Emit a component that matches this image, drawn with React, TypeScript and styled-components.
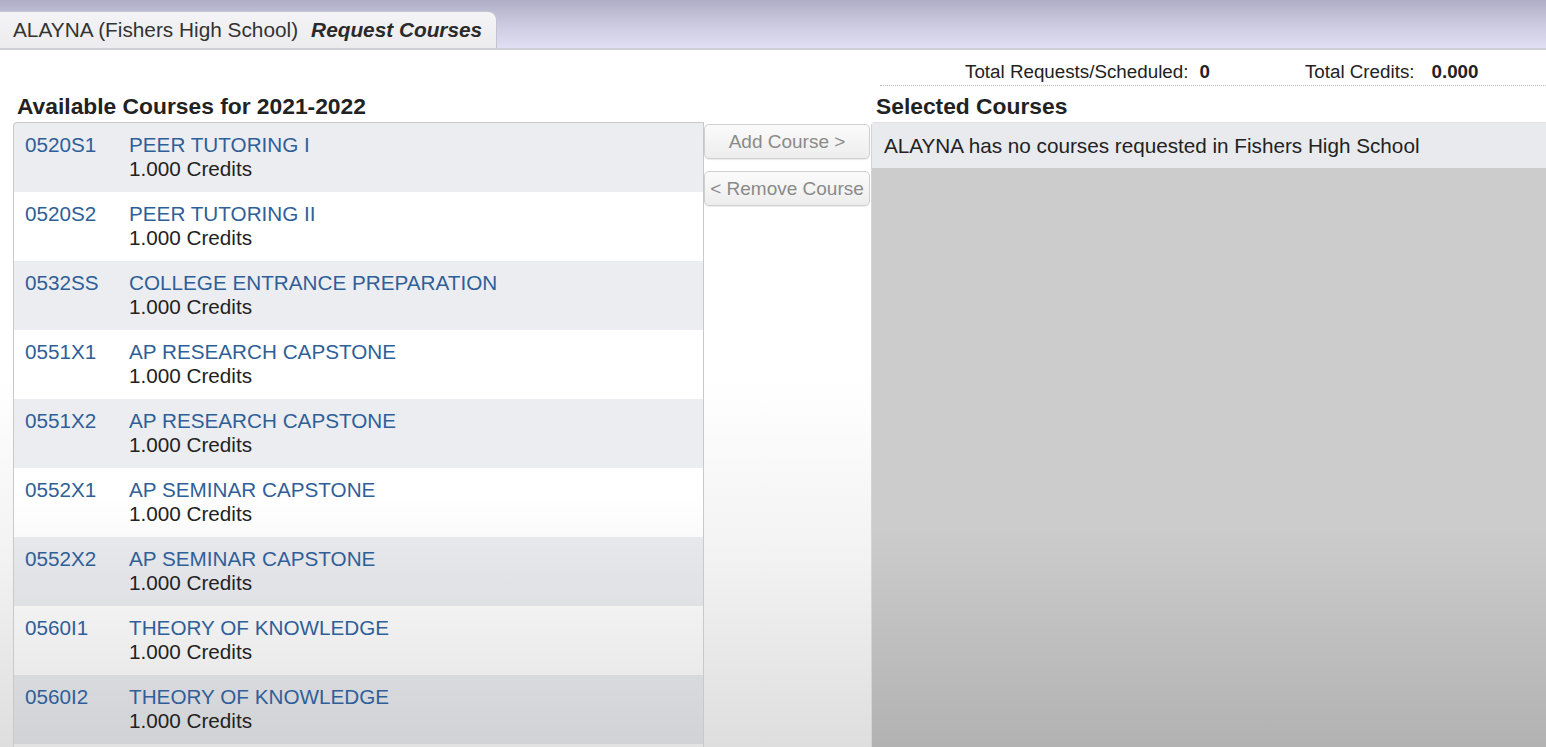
import styled, { createGlobalStyle } from 'styled-components'

const GlobalStyle = createGlobalStyle`
html, body {
  margin: 0;
  padding: 0;
}
body {
  font-family: "Liberation Sans", Arial, Helvetica, sans-serif;
  color: #222;
}
`

const Page = styled.div`
height: 100vh;
overflow: hidden;
display: flex;
flex-direction: column;
background: linear-gradient(180deg, #ffffff 0%, #ffffff 50%, #f2f2f2 75%, #dedede 100%);
`

const TopBar = styled.div`
height: 48px;
flex-shrink: 0;
display: flex;
align-items: flex-end;
background: linear-gradient(180deg, #b0aec7 0%, #c9c7dd 45%, #e1dff3 100%);
border-bottom: 2px solid #cfcfd6;
`

const Tab = styled.div`
height: 37px;
width: 497px;
box-sizing: border-box;
display: flex;
align-items: center;
padding-left: 13px;
gap: 13px;
font-size: 20.8px;
color: #333;
background: linear-gradient(180deg, #f4f4f6 0%, #ececee 100%);
border: 1px solid #c3c2d0;
border-left: none;
border-bottom: none;
border-top-right-radius: 9px;
`

const TabTitle = styled.span`
font-weight: bold;
font-style: italic;
color: #2a2a2a;
`

const Body = styled.div`
flex: 1;
min-height: 0;
display: grid;
grid-template-columns: 691px 167px 1fr;
grid-template-rows: 37px 35px 1fr;
padding-left: 13px;
`

const Stats = styled.div`
grid-column: 3;
grid-row: 1;
display: flex;
align-items: flex-end;
padding: 0 0 2px 85px;
margin-left: 9px;
font-size: 18.8px;
border-bottom: 1px dotted #b8b8b8;
margin-bottom: 1px;
`

const StatLabel = styled.span<{ $gap?: number }>`
margin-left: ${p => p.$gap || 0}px;
`

const StatValue = styled.span<{ $gap?: number }>`
font-weight: bold;
margin-left: ${p => p.$gap || 11}px;
`

const Heading = styled.h2<{ $col: number }>`
grid-column: ${p => p.$col};
grid-row: 2;
margin: 0;
padding: 4px 0 0 ${p => (p.$col === 1 ? 4 : 5)}px;
font-size: 22.8px;
font-weight: bold;
color: #222;
display: flex;
align-items: center;
height: 100%;
box-sizing: border-box;
`

const CourseList = styled.div`
grid-column: 1;
grid-row: 3;
min-height: 0;
overflow: hidden;
border: 1px solid #c9c9cc;
border-bottom: none;
border-top-left-radius: 4px;
background: linear-gradient(180deg, #ffffff 0%, #ffffff 60%, #f0f0f0 80%, #e2e2e2 100%);
`

const CourseRow = styled.div<{ $odd: boolean }>`
height: 69px;
box-sizing: border-box;
display: flex;
padding: 10px 0 0 11px;
background: ${p => (p.$odd ? 'rgba(40, 55, 95, 0.09)' : 'transparent')};
font-size: 20.7px;
line-height: 24px;
`

const Code = styled.div`
width: 104px;
flex-shrink: 0;
color: #2f5f98;
`

const CourseInfo = styled.div`
display: flex;
flex-direction: column;
`

const CourseName = styled.span`
color: #2f5f98;
`

const Credits = styled.span`
color: #222;
`

const Actions = styled.div`
grid-column: 2;
grid-row: 3;
display: flex;
flex-direction: column;
gap: 12px;
padding-top: 2px;
`

const ActionButton = styled.button`
width: 166px;
height: 35px;
padding: 0;
font-family: inherit;
font-size: 19px;
color: #8a8a8a;
background: linear-gradient(180deg, #fbfbfb 0%, #ededed 100%);
border: 1px solid #cfcfcf;
border-radius: 5px;
box-shadow: 0 1px 1px rgba(0, 0, 0, 0.08);
cursor: default;
`

const Selected = styled.div`
grid-column: 3;
grid-row: 3;
display: flex;
flex-direction: column;
border-left: 1px solid #d4d4d4;
border-top: 1px solid #e0e0e0;
border-top-left-radius: 4px;
background: linear-gradient(180deg, #cccccc 0%, #cccccc 65%, #b2b2b2 100%);
`

const EmptyNote = styled.div`
height: 45px;
box-sizing: border-box;
display: flex;
align-items: center;
padding-left: 12px;
font-size: 20.7px;
color: #222;
background: #e9eaee;
`

const courses = [
  { code: '0520S1', name: 'PEER TUTORING I' },
  { code: '0520S2', name: 'PEER TUTORING II' },
  { code: '0532SS', name: 'COLLEGE ENTRANCE PREPARATION' },
  { code: '0551X1', name: 'AP RESEARCH CAPSTONE' },
  { code: '0551X2', name: 'AP RESEARCH CAPSTONE' },
  { code: '0552X1', name: 'AP SEMINAR CAPSTONE' },
  { code: '0552X2', name: 'AP SEMINAR CAPSTONE' },
  { code: '0560I1', name: 'THEORY OF KNOWLEDGE' },
  { code: '0560I2', name: 'THEORY OF KNOWLEDGE' },
]

const App = () => {
  return (
    <Page>
      <GlobalStyle />
      <TopBar>
        <Tab>
          <span>ALAYNA (Fishers High School)</span>
          <TabTitle>Request Courses</TabTitle>
        </Tab>
      </TopBar>
      <Body>
        <Stats>
          <StatLabel>Total Requests/Scheduled:</StatLabel>
          <StatValue>0</StatValue>
          <StatLabel $gap={95}>Total Credits:</StatLabel>
          <StatValue $gap={17}>0.000</StatValue>
        </Stats>
        <Heading $col={1}>Available Courses for 2021-2022</Heading>
        <Heading $col={3}>Selected Courses</Heading>
        <CourseList>
          {courses.map((c, i) => (
            <CourseRow key={c.code} $odd={i % 2 === 0}>
              <Code>{c.code}</Code>
              <CourseInfo>
                <CourseName>{c.name}</CourseName>
                <Credits>1.000 Credits</Credits>
              </CourseInfo>
            </CourseRow>
          ))}
        </CourseList>
        <Actions>
          <ActionButton>Add Course &gt;</ActionButton>
          <ActionButton>&lt; Remove Course</ActionButton>
        </Actions>
        <Selected>
          <EmptyNote>ALAYNA has no courses requested in Fishers High School</EmptyNote>
        </Selected>
      </Body>
    </Page>
  )
}

export default App
